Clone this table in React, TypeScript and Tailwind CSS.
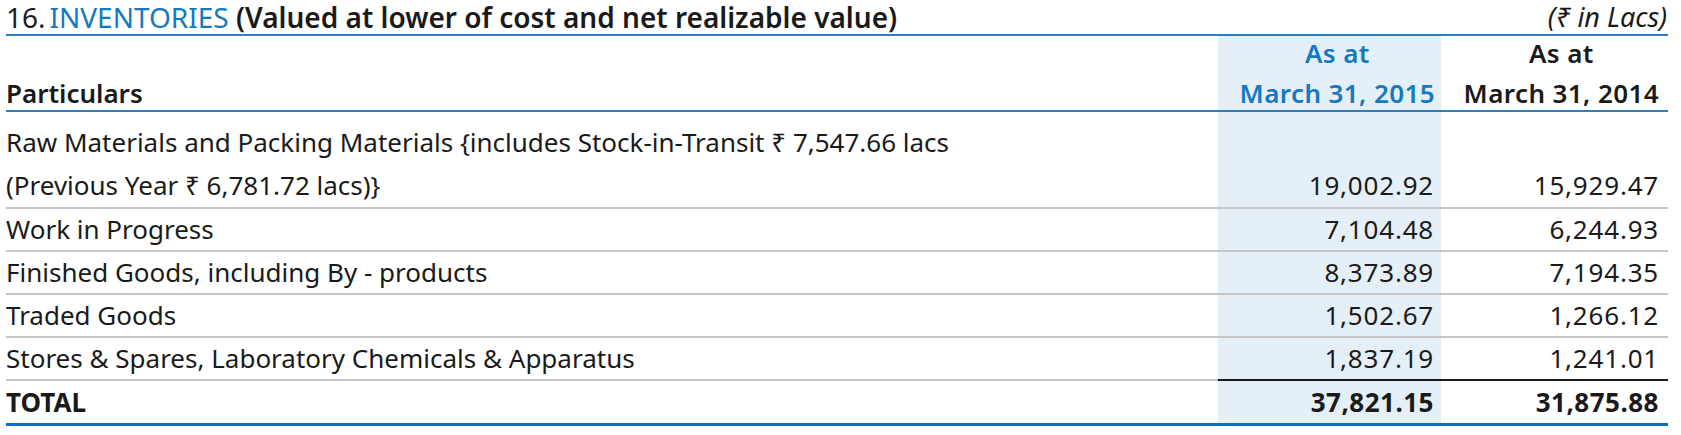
const rows = [
  { label: ['Raw Materials and Packing Materials {includes Stock-in-Transit ₹ 7,547.66 lacs', '(Previous Year ₹ 6,781.72 lacs)}'], cur: '19,002.92', prev: '15,929.47' },
  { label: ['Work in Progress'], cur: '7,104.48', prev: '6,244.93' },
  { label: ['Finished Goods, including By - products'], cur: '8,373.89', prev: '7,194.35' },
  { label: ['Traded Goods'], cur: '1,502.67', prev: '1,266.12' },
  { label: ['Stores & Spares, Laboratory Chemicals & Apparatus'], cur: '1,837.19', prev: '1,241.01' },
]

function YearHead({ year, shaded }: { year: string; shaded?: boolean }) {
  return (
    <div className={`flex justify-end font-semibold tracking-[0.4px] ${shaded ? 'bg-[#e4eff7] text-[#1479c0] pr-[6px]' : 'pr-[9px]'}`}>
      <div className="text-center">
        <p className="leading-[34px]">As at</p>
        <p className="pt-[6px] leading-[34px]">March 31, {year}</p>
      </div>
    </div>
  )
}

export default function App() {
  return (
    <div className="bg-white w-[1681px] h-[435px] font-['Noto_Sans',sans-serif] text-[#1a1a1a] text-[26px]">
      <div className="ml-[6px] w-[1662px]">
        {/* Title */}
        <div className="flex items-end justify-between h-[36px] border-b-2 border-[#2a80c2] leading-[34px]">
          <p className="text-[28px]">
            16.<span className="text-[#1479c0] ml-[4px]">INVENTORIES</span>{' '}
            <span className="font-semibold">(Valued at lower of cost and net realizable value)</span>
          </p>
          <p className="italic text-[27px] pr-[1px]">(₹ in Lacs)</p>
        </div>

        {/* Header */}
        <div className="grid grid-cols-[1212px_223px_227px] border-b-2 border-[#2a80c2]">
          <div className="h-[74px] flex items-end">
            <p className="pt-[6px] leading-[34px] font-semibold">Particulars</p>
          </div>
          <YearHead year="2015" shaded />
          <YearHead year="2014" />
        </div>

        {/* Body */}
        {rows.map((r, i) => {
          const last = i === rows.length - 1
          const multi = r.label.length > 1
          const lead = multi ? 'leading-[43px]' : 'leading-[41px]'
          const line = last ? 'border-b-2 border-[#1a1a1a]' : 'border-b-2 border-[#c6c6c6]'
          return (
            <div key={i} className="grid grid-cols-[1212px_223px_227px]">
              <div className={`border-b-2 border-[#c6c6c6] ${multi ? 'pt-[9px]' : ''} ${lead}`}>
                {r.label.map((l) => <p key={l}>{l}</p>)}
              </div>
              <div className={`bg-[#e4eff7] text-right pr-[7px] tracking-[0.8px] flex items-end ${line}`}>
                <p className={`w-full ${lead}`}>{r.cur}</p>
              </div>
              <div className={`text-right pr-[9px] tracking-[0.8px] flex items-end ${line}`}>
                <p className={`w-full ${lead}`}>{r.prev}</p>
              </div>
            </div>
          )
        })}

        {/* Total */}
        <div className="grid grid-cols-[1212px_223px_227px] border-b-[3px] border-[#0b70bd] font-bold leading-[42px]">
          <p>TOTAL</p>
          <p className="bg-[#e4eff7] text-right pr-[7px] tracking-[0.5px]">37,821.15</p>
          <p className="text-right pr-[9px] tracking-[0.5px]">31,875.88</p>
        </div>
      </div>
    </div>
  )
}
